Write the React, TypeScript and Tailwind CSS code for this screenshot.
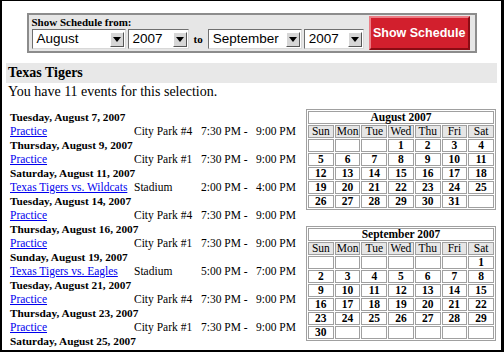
import React from "react";

const serif = { fontFamily: '"Liberation Serif", "Times New Roman", serif' };
const sans = { fontFamily: '"Liberation Sans", Arial, sans-serif' };

type Ev = { date: string; title?: string; place?: string; start?: string; end?: string };

const events: Ev[] = [
  { date: "Tuesday, August 7, 2007", title: "Practice", place: "City Park #4", start: "7:30 PM -", end: "9:00 PM" },
  { date: "Thursday, August 9, 2007", title: "Practice", place: "City Park #1", start: "7:30 PM -", end: "9:00 PM" },
  { date: "Saturday, August 11, 2007", title: "Texas Tigers vs. Wildcats", place: "Stadium", start: "2:00 PM -", end: "4:00 PM" },
  { date: "Tuesday, August 14, 2007", title: "Practice", place: "City Park #4", start: "7:30 PM -", end: "9:00 PM" },
  { date: "Thursday, August 16, 2007", title: "Practice", place: "City Park #1", start: "7:30 PM -", end: "9:00 PM" },
  { date: "Sunday, August 19, 2007", title: "Texas Tigers vs. Eagles", place: "Stadium", start: "5:00 PM -", end: "7:00 PM" },
  { date: "Tuesday, August 21, 2007", title: "Practice", place: "City Park #4", start: "7:30 PM -", end: "9:00 PM" },
  { date: "Thursday, August 23, 2007", title: "Practice", place: "City Park #1", start: "7:30 PM -", end: "9:00 PM" },
  { date: "Saturday, August 25, 2007" },
];

function Select({ value, width }: { value: string; width: string }) {
  return (
    <div
      className={`flex h-[20px] items-center justify-between border border-t-[#6f6f6f] border-l-[#6f6f6f] border-r-[#d8d8d8] border-b-[#d8d8d8] bg-white pl-[4px] pr-[1px] ${width}`}
      style={sans}
    >
      <span className="text-[13.5px] leading-[16px] text-black">{value}</span>
      <div className="flex h-[15px] w-[14px] items-center justify-center border border-t-white border-l-white border-r-[#555] border-b-[#555] bg-[#d6d6d6]">
        <div className="h-0 w-0 border-x-[4px] border-t-[5px] border-x-transparent border-t-black" />
      </div>
    </div>
  );
}

function Calendar({ title, start, days }: { title: string; start: number; days: number }) {
  const cells: (number | null)[] = [];
  for (let i = 0; i < start; i++) cells.push(null);
  for (let d = 1; d <= days; d++) cells.push(d);
  while (cells.length % 7) cells.push(null);
  const weeks: (number | null)[][] = [];
  for (let i = 0; i < cells.length; i += 7) weeks.push(cells.slice(i, i + 7));
  const td = "border border-[#a0a0a0] p-0 text-center text-[11.5px] leading-[11px] h-[13px]";
  return (
    <table className="w-[190px] table-fixed border-separate border-spacing-[1px] border border-[#a0a0a0] text-black" style={serif}>
      <tbody>
        <tr>
          <td colSpan={7} className={`${td} font-bold`}>{title}</td>
        </tr>
        <tr>
          {["Sun", "Mon", "Tue", "Wed", "Thu", "Fri", "Sat"].map((d) => (
            <td key={d} className={`${td} bg-[#e6e6e6]`}>{d}</td>
          ))}
        </tr>
        {weeks.map((w, i) => (
          <tr key={i}>
            {w.map((d, j) => (
              <td key={j} className={`${td} font-bold`}>{d ?? ""}</td>
            ))}
          </tr>
        ))}
      </tbody>
    </table>
  );
}

export default function App() {
  return (
    <div className="h-[352px] w-[504px] overflow-hidden border-t border-l-2 border-r-[3px] border-b-2 border-black bg-white" style={serif}>
      <div className="flex justify-center pt-[12px]">
        <div className="flex h-[40px] w-[450px] items-center border-2 border-[#8c8c8c] bg-[#e6e6e6] pl-[3px] pr-[2px]">
          <div className="flex flex-col">
            <div className="text-[11px] font-bold leading-[11px] text-black">Show Schedule from:</div>
            <div className="mt-[1px] flex items-center gap-[2px]">
              <Select value="August" width="w-[94px]" />
              <Select value="2007" width="w-[61px]" />
              <span className="mx-[3px] text-[11px] font-bold text-black">to</span>
              <Select value="September" width="w-[94px]" />
              <Select value="2007" width="w-[60px]" />
            </div>
          </div>
          <button
            className="ml-[5px] h-[34px] w-[101px] border-2 border-t-[#ec7e86] border-l-[#ec7e86] border-r-[#8a0c14] border-b-[#8a0c14] bg-[#d21f2d] text-[12.5px] font-bold text-white"
            style={sans}
          >
            Show Schedule
          </button>
        </div>
      </div>

      <div className="px-[4px]">
        <div className="mt-[10px] h-[20px] bg-[#e8e8e8] pl-[2px] text-[14px] font-bold leading-[20px] text-black">Texas Tigers</div>
        <div className="pl-[2px] text-[14px] leading-[18px] text-black">You have 11 events for this selection.</div>

        <div className="mt-[8px] flex items-start">
          <div className="w-[296px] pl-[4px] pt-[1px]">
            {events.map((e) => (
              <div key={e.date}>
                <div className="h-[14px] text-[11.3px] font-bold leading-[14px] text-black">{e.date}</div>
                {e.title && (
                  <div className="grid h-[14px] grid-cols-[124px_67px_55px_1fr] text-[11.5px] leading-[14px] text-black">
                    <a href="#" className="text-[#0000ee] underline">{e.title}</a>
                    <span>{e.place}</span>
                    <span>{e.start}</span>
                    <span>{e.end}</span>
                  </div>
                )}
              </div>
            ))}
          </div>
          <div className="ml-[4px] flex flex-col gap-[16px]">
            <Calendar title="August 2007" start={3} days={31} />
            <Calendar title="September 2007" start={6} days={30} />
          </div>
        </div>
      </div>
    </div>
  );
}
